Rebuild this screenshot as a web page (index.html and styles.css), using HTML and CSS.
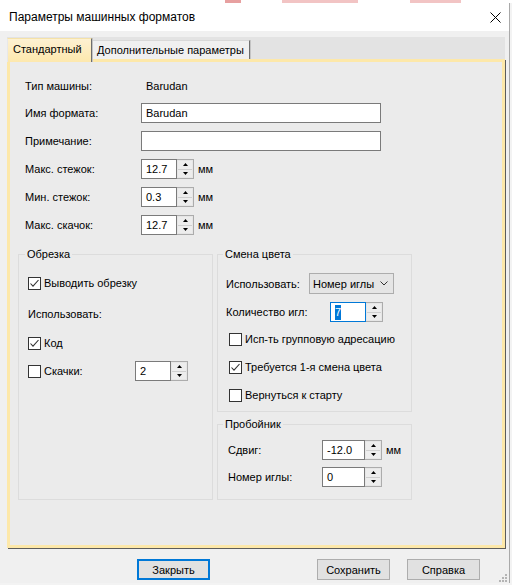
FILE: index.html
```html
<!DOCTYPE html>
<html lang="ru">
<head>
<meta charset="utf-8">
<title>Параметры машинных форматов</title>
<link rel="stylesheet" href="styles.css">
</head>
<body>
<div class="desk-top"></div>
<div class="window">
  <div class="titlebar">
    <span class="title">Параметры машинных форматов</span>
    <svg class="close" width="11" height="11" viewBox="0 0 11 11"><path d="M0.5 0.5 L10.5 10.5 M10.5 0.5 L0.5 10.5" stroke="#000" stroke-width="1" fill="none"/></svg>
  </div>
  <div class="client">
    <div class="tabctl">
      <div class="tabstrip">
        <div class="tab active">Стандартный</div>
        <div class="tab inactive">Дополнительные параметры</div>
      </div>
      <div class="page">
        <div class="rows">
          <div class="row first"><span class="lbl">Тип машины:</span><span class="static">Barudan</span></div>
          <div class="row"><span class="lbl">Имя формата:</span><div class="edit wide">Barudan</div></div>
          <div class="row"><span class="lbl">Примечание:</span><div class="edit wide"></div></div>
          <div class="row"><span class="lbl">Макс. стежок:</span>
            <div class="spin"><div class="sfield">12.7</div><div class="sbtn"><span class="half"><svg width="5" height="3" viewBox="0 0 5 3"><path d="M0 3 L2.5 0 L5 3 Z" fill="#000"/></svg></span><span class="half"><svg width="5" height="3" viewBox="0 0 5 3"><path d="M0 0 L2.5 3 L5 0 Z" fill="#000"/></svg></span></div></div>
            <span class="unit">мм</span></div>
          <div class="row"><span class="lbl">Мин. стежок:</span>
            <div class="spin"><div class="sfield">0.3</div><div class="sbtn"><span class="half"><svg width="5" height="3" viewBox="0 0 5 3"><path d="M0 3 L2.5 0 L5 3 Z" fill="#000"/></svg></span><span class="half"><svg width="5" height="3" viewBox="0 0 5 3"><path d="M0 0 L2.5 3 L5 0 Z" fill="#000"/></svg></span></div></div>
            <span class="unit">мм</span></div>
          <div class="row"><span class="lbl">Макс. скачок:</span>
            <div class="spin"><div class="sfield">12.7</div><div class="sbtn"><span class="half"><svg width="5" height="3" viewBox="0 0 5 3"><path d="M0 3 L2.5 0 L5 3 Z" fill="#000"/></svg></span><span class="half"><svg width="5" height="3" viewBox="0 0 5 3"><path d="M0 0 L2.5 3 L5 0 Z" fill="#000"/></svg></span></div></div>
            <span class="unit">мм</span></div>
        </div>

        <div class="groups">
          <fieldset class="grp grp-trim">
            <legend>Обрезка</legend>
            <div class="gin trim-in">
              <div class="crow"><span class="cb"><svg width="13" height="13" viewBox="0 0 13 13"><rect x="0.5" y="0.5" width="12" height="12" fill="#fff" stroke="#333"/><path d="M2.5 6.5 L5 9.2 L10.5 3" stroke="#333" stroke-width="1.1" fill="none"/></svg></span><span class="ctext">Выводить обрезку</span></div>
              <div class="crow r-use"><span>Использовать:</span></div>
              <div class="crow r-code"><span class="cb"><svg width="13" height="13" viewBox="0 0 13 13"><rect x="0.5" y="0.5" width="12" height="12" fill="#fff" stroke="#333"/><path d="M2.5 6.5 L5 9.2 L10.5 3" stroke="#333" stroke-width="1.1" fill="none"/></svg></span><span class="ctext">Код</span></div>
              <div class="crow r-jump">
                <div class="cbwrap"><span class="cb"><svg width="13" height="13" viewBox="0 0 13 13"><rect x="0.5" y="0.5" width="12" height="12" fill="#fff" stroke="#333"/></svg></span><span class="ctext">Скачки:</span></div>
                <div class="spin"><div class="sfield">2</div><div class="sbtn"><span class="half"><svg width="5" height="3" viewBox="0 0 5 3"><path d="M0 3 L2.5 0 L5 3 Z" fill="#000"/></svg></span><span class="half"><svg width="5" height="3" viewBox="0 0 5 3"><path d="M0 0 L2.5 3 L5 0 Z" fill="#000"/></svg></span></div></div>
              </div>
            </div>
          </fieldset>

          <div class="rcol">
            <fieldset class="grp grp-color">
              <legend>Смена цвета</legend>
              <div class="gin color-in">
                <div class="crow r-sel"><span class="lbl2">Использовать:</span>
                  <div class="select"><span>Номер иглы</span><svg width="8" height="5" viewBox="0 0 8 5"><path d="M0.5 0.5 L4 4 L7.5 0.5" stroke="#333" stroke-width="1" fill="none"/></svg></div>
                </div>
                <div class="crow r-cnt"><span class="lbl3">Количество игл:</span>
                  <div class="spin focus"><div class="sfield"><span class="selected">7</span></div><div class="sbtn"><span class="half"><svg width="5" height="3" viewBox="0 0 5 3"><path d="M0 3 L2.5 0 L5 3 Z" fill="#000"/></svg></span><span class="half"><svg width="5" height="3" viewBox="0 0 5 3"><path d="M0 0 L2.5 3 L5 0 Z" fill="#000"/></svg></span></div></div>
                </div>
                <div class="crow cbrow r-c1"><span class="cb"><svg width="13" height="13" viewBox="0 0 13 13"><rect x="0.5" y="0.5" width="12" height="12" fill="#fff" stroke="#333"/></svg></span><span class="ctext">Исп-ть групповую адресацию</span></div>
                <div class="crow cbrow r-c2"><span class="cb"><svg width="13" height="13" viewBox="0 0 13 13"><rect x="0.5" y="0.5" width="12" height="12" fill="#fff" stroke="#333"/><path d="M2.5 6.5 L5 9.2 L10.5 3" stroke="#333" stroke-width="1.1" fill="none"/></svg></span><span class="ctext">Требуется 1-я смена цвета</span></div>
                <div class="crow cbrow r-c3"><span class="cb"><svg width="13" height="13" viewBox="0 0 13 13"><rect x="0.5" y="0.5" width="12" height="12" fill="#fff" stroke="#333"/></svg></span><span class="ctext">Вернуться к старту</span></div>
              </div>
            </fieldset>

            <fieldset class="grp grp-punch">
              <legend>Пробойник</legend>
              <div class="gin punch-in">
                <div class="crow r-shift"><span class="lbl4">Сдвиг:</span>
                  <div class="spin w60"><div class="sfield">-12.0</div><div class="sbtn"><span class="half"><svg width="5" height="3" viewBox="0 0 5 3"><path d="M0 3 L2.5 0 L5 3 Z" fill="#000"/></svg></span><span class="half"><svg width="5" height="3" viewBox="0 0 5 3"><path d="M0 0 L2.5 3 L5 0 Z" fill="#000"/></svg></span></div></div>
                  <span class="unit">мм</span>
                </div>
                <div class="crow r-needle"><span class="lbl4">Номер иглы:</span>
                  <div class="spin w60"><div class="sfield">0</div><div class="sbtn"><span class="half"><svg width="5" height="3" viewBox="0 0 5 3"><path d="M0 3 L2.5 0 L5 3 Z" fill="#000"/></svg></span><span class="half"><svg width="5" height="3" viewBox="0 0 5 3"><path d="M0 0 L2.5 3 L5 0 Z" fill="#000"/></svg></span></div></div>
                </div>
              </div>
            </fieldset>
          </div>
        </div>
      </div>
    </div>

    <div class="buttons">
      <div class="btn default">Закрыть</div>
      <div class="btn save">Сохранить</div>
      <div class="btn help">Справка</div>
    </div>
  </div>
  <svg class="grip" width="9" height="9" viewBox="0 0 9 9">
    <rect x="7" y="1" width="2" height="2" fill="#b4b4b4"/>
    <rect x="4" y="4" width="2" height="2" fill="#b4b4b4"/>
    <rect x="7" y="4" width="2" height="2" fill="#b4b4b4"/>
    <rect x="1" y="7" width="2" height="2" fill="#b4b4b4"/>
    <rect x="4" y="7" width="2" height="2" fill="#b4b4b4"/>
    <rect x="7" y="7" width="2" height="2" fill="#b4b4b4"/>
  </svg>
</div>
</body>
</html>
```

FILE: styles.css
```css
* { box-sizing: border-box; }

body {
  margin: 0;
  width: 512px;
  height: 585px;
  overflow: hidden;
  background: #f3f3f3;
  font-family: "Liberation Sans", Arial, sans-serif;
  font-size: 11px;
  color: #000;
}

.desk-top {
  height: 3px;
  background: linear-gradient(90deg, #fff 0 44%, #e7a0a0 44% 47%, #fff 47% 55%, #f2c4c4 55% 70%, #fff 70% 80%, #f2c4c4 80% 90%, #fff 90%);
}

.window {
  position: relative;
  width: 510px;
  height: 580px;
  background: #f0f0f0;
  border-right: 1px solid #a9a9a9;
  display: flex;
  flex-direction: column;
}

.titlebar {
  height: 28px;
  background: #fff;
  display: flex;
  align-items: center;
  padding-left: 9px;
  flex-shrink: 0;
}

.title {
  font-size: 12px;
  color: #000;
}

.close {
  margin-left: auto;
  margin-right: 8px;
}

.client {
  display: flex;
  flex-direction: column;
  padding: 6px 0 0 7px;
}

.tabctl {
  width: 498px;
  display: flex;
  flex-direction: column;
}

.tabstrip {
  height: 22px;
  background: #e3e3e3;
  display: flex;
  align-items: flex-end;
}

.tab {
  display: flex;
  align-items: center;
}

.tab.active {
  position: relative;
  z-index: 1;
  width: 85px;
  height: 24px;
  margin-bottom: -3px;
  padding: 0 0 3px 5px;
  background: linear-gradient(#fdf1d2, #fde8ad);
  border-left: 1px solid #e8e8e8;
  border-top: 1px solid #f5e2a8;
  border-right: 1px solid #6e6e6e;
  box-shadow: 1px 0 0 #c4c4c4;
}

.tab.inactive {
  width: 157px;
  height: 19px;
  margin-left: 1px;
  padding-left: 4px;
  background: #f0f0f0;
  border-top: 1px solid #d8d8d8;
  border-right: 1px solid #6e6e6e;
  box-shadow: 1px 0 0 #c4c4c4;
}

.page {
  width: 498px;
  height: 489px;
  background: #ebebeb;
  border: 3px solid #fde8a9;
  box-shadow: 1px 1px 0 #5c5c5c;
  padding: 14px 0 0 8px;
  display: flex;
  flex-direction: column;
}

.rows {
  margin-left: 7px;
  display: flex;
  flex-direction: column;
  gap: 8px;
}

.row {
  height: 20px;
  display: flex;
  align-items: center;
}

.row.first {
  height: 19px;
}

.lbl {
  width: 116px;
  flex-shrink: 0;
}

.static {
  padding-left: 5px;
}

.edit {
  height: 20px;
  background: #fff;
  border: 1px solid #7a7a7a;
  padding-left: 4px;
  display: flex;
  align-items: center;
}

.edit.wide {
  width: 240px;
}

.spin {
  width: 53px;
  height: 20px;
  display: flex;
  flex-shrink: 0;
}

.spin.w60 {
  width: 60px;
}

.sfield {
  flex: 1;
  background: #fff;
  border: 1px solid #7a7a7a;
  padding-left: 4px;
  display: flex;
  align-items: center;
}

.spin.focus .sfield {
  border-color: #0078d7;
}

.selected {
  background: #0078d7;
  color: #fff;
  padding: 1px 0;
  line-height: 13px;
}

.sbtn {
  width: 17px;
  flex-shrink: 0;
  border: 1px solid #acacac;
  border-left: none;
  background: #e6e6e6;
  display: flex;
  flex-direction: column;
  padding: 1px;
}

.half {
  flex: 1;
  display: flex;
  align-items: center;
  justify-content: center;
  background: #ededed;
}

.half + .half {
  border-top: 1px solid #cfcfcf;
}

.unit {
  margin-left: 4px;
}

.groups {
  margin-top: 12px;
  display: flex;
  gap: 4px;
}

.grp {
  margin: 0;
  padding: 0;
  min-width: 0;
  width: 195px;
  border: 1px solid #dcdcdc;
  font-family: inherit;
  font-size: 11px;
}

.grp legend {
  padding: 0 2px;
  margin-left: 6px;
  line-height: 14px;
  font-size: 11px;
}

.rcol .grp legend {
  margin-left: 5px;
}

.rcol {
  display: flex;
  flex-direction: column;
  gap: 5px;
}

.grp-color {
  height: 165px;
}

.grp-punch {
  height: 83px;
}

.gin {
  display: flex;
  flex-direction: column;
}

.crow {
  height: 20px;
  display: flex;
  align-items: center;
}

.cb {
  width: 13px;
  height: 13px;
  display: flex;
  flex-shrink: 0;
}

.ctext {
  margin-left: 3px;
}

.trim-in {
  padding: 12px 0 0 9px;
}

.trim-in .r-use { margin-top: 11px; }
.trim-in .r-code { margin-top: 9px; }
.trim-in .r-jump { margin-top: 8px; }

.cbwrap {
  width: 107px;
  display: flex;
  align-items: center;
}

.color-in {
  padding: 12px 0 0 8px;
}

.r-sel {
  height: 21px;
}

.lbl2 {
  width: 83px;
}

.lbl3 {
  width: 104px;
}

.select {
  width: 85px;
  height: 21px;
  background: #e5e5e5;
  border: 1px solid #adadad;
  display: flex;
  align-items: center;
  justify-content: space-between;
  padding: 0 5px 0 3px;
}

.color-in .r-cnt { margin-top: 8px; }
.color-in .cbrow { padding-left: 3px; }
.color-in .r-c1 { margin-top: 7px; }
.color-in .r-c2 { margin-top: 8px; }
.color-in .r-c3 { margin-top: 8px; }

.punch-in {
  padding: 9px 0 0 10px;
}

.lbl4 {
  width: 94px;
}

.punch-in .r-needle { margin-top: 7px; }

.buttons {
  margin-top: 11px;
  display: flex;
  padding-left: 130px;
}

.btn {
  width: 73px;
  height: 21px;
  background: #e1e1e1;
  border: 1px solid #adadad;
  display: flex;
  align-items: center;
  justify-content: center;
}

.btn.default {
  border: 2px solid #0078d7;
}

.btn.save {
  margin-left: 107px;
}

.btn.help {
  margin-left: 17px;
}

.grip {
  position: absolute;
  right: 2px;
  bottom: 1px;
}
```
